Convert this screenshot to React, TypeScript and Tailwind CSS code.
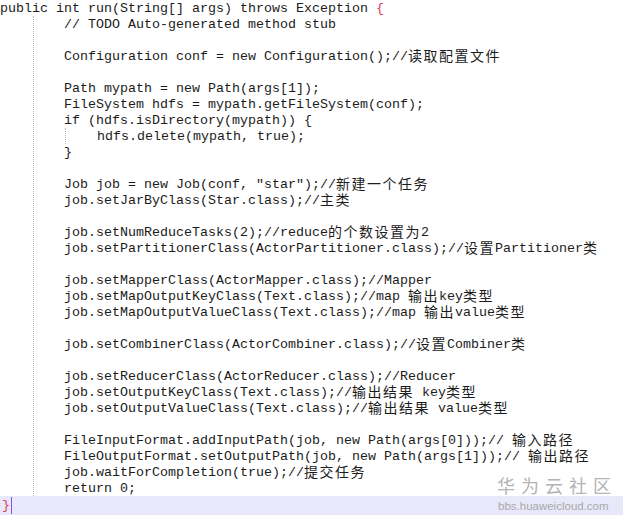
const lines: string[] = [
  '// TODO Auto-generated method stub',
  '',
  'Configuration conf = new Configuration();//读取配置文件',
  '',
  'Path mypath = new Path(args[1]);',
  'FileSystem hdfs = mypath.getFileSystem(conf);',
  'if (hdfs.isDirectory(mypath)) {',
  '@@hdfs.delete(mypath, true);',
  '}',
  '',
  'Job job = new Job(conf, "star");//新建一个任务',
  'job.setJarByClass(Star.class);//主类',
  '',
  'job.setNumReduceTasks(2);//reduce的个数设置为2',
  'job.setPartitionerClass(ActorPartitioner.class);//设置Partitioner类',
  '',
  'job.setMapperClass(ActorMapper.class);//Mapper',
  'job.setMapOutputKeyClass(Text.class);//map 输出key类型',
  'job.setMapOutputValueClass(Text.class);//map 输出value类型',
  '',
  'job.setCombinerClass(ActorCombiner.class);//设置Combiner类',
  '',
  'job.setReducerClass(ActorReducer.class);//Reducer',
  'job.setOutputKeyClass(Text.class);//输出结果 key类型',
  'job.setOutputValueClass(Text.class);//输出结果 value类型',
  '',
  'FileInputFormat.addInputPath(job, new Path(args[0]));// 输入路径',
  'FileOutputFormat.setOutputPath(job, new Path(args[1]));// 输出路径',
  'job.waitForCompletion(true);//提交任务',
  'return 0;',
];

// split into ascii / CJK runs so the Chinese can be spaced like the editor font
function Code({ text }: { text: string }) {
  const parts = text.split(/([\u4e00-\u9fff]+)/);
  return (
    <>
      {parts.map((p, i) =>
        /[\u4e00-\u9fff]/.test(p) ? (
          <span
            key={i}
            className="text-[14px] tracking-[1.5px] leading-[0] align-[-1px] [font-family:'Noto_Sans_CJK_SC',sans-serif]"
          >
            {p}
          </span>
        ) : (
          <span key={i}>{p}</span>
        )
      )}
    </>
  );
}

export default function App() {
  return (
    <div className="relative w-[623px] h-[515px] overflow-hidden bg-white text-[#1c1c1c] text-[13.33px] leading-4 [font-family:'Liberation_Mono',monospace] whitespace-pre">
      <div className="h-4 pt-[1px]">
        public int run(String[] args) throws Exception <span className="text-[#e0405a]">{'{'}</span>
      </div>

      {/* method body */}
      <div className="ml-[33px] border-l border-dotted border-[#b8b8b8] pl-[30px]">
        {lines.map((l, i) =>
          l.startsWith('@@') ? (
            <div key={i} className="h-4 flex">
              <span className="ml-[1px] border-l border-dotted border-[#b8b8b8] pl-[31px]" />
              <span className="pt-[1px]">
                <Code text={l.slice(2)} />
              </span>
            </div>
          ) : (
            <div key={i} className="h-4 pt-[1px]">
              <Code text={l} />
            </div>
          )
        )}
      </div>

      {/* current line */}
      <div className="h-[19px] bg-[#e8e8fa] flex items-center pl-[2px]">
        <span className="text-[#e0405a]">{'}'}</span>
        <span className="ml-[1px] w-[1px] h-[17px] bg-[#7a5ad8]" />
      </div>

      {/* watermark */}
      <div className="absolute left-[497px] top-[474px] text-[18px] leading-[22px] tracking-[6px] text-[#b4b4b4] [font-family:'Noto_Sans_CJK_SC',sans-serif]">
        华为云社区
      </div>
      <div className="absolute left-[498px] top-[499px] text-[11.5px] leading-[14px] text-[#a8a8a8] [font-family:'Liberation_Sans',sans-serif]">
        bbs.huaweicloud.com
      </div>
    </div>
  );
}
